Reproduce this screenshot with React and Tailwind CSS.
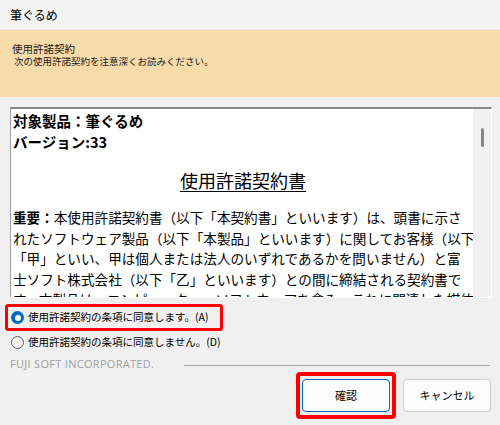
export default function App() {
  const jp = { fontFamily: '"Noto Sans CJK JP", "Noto Sans", sans-serif' };

  return (
    <div className="w-[500px] h-[425px] bg-[#f0f0f0] overflow-hidden text-black" style={jp}>
      {/* Title bar */}
      <div className="h-[30px] bg-[#f3f3f3] border-b border-[#e8e8e8] flex items-center pl-[10px] text-[12px] leading-none">
        筆ぐるめ
      </div>

      {/* Header */}
      <div className="h-[67px] bg-[#f8dbab] pl-[12px] pt-[12px]">
        <div className="text-[10.5px] leading-[13px] text-[#1a1a1a]">使用許諾契約</div>
        <div className="text-[9.5px] leading-[13px] pl-[2px] text-[#1a1a1a]">次の使用許諾契約を注意深くお読みください。</div>
      </div>

      {/* License text box */}
      <div className="mt-[10px] ml-[10px] w-[482px] h-[191px] flex bg-white border-t-2 border-l border-t-[#8a8a8a] border-l-[#a0a0a0] border-r border-b border-r-white border-b-white">
        <div className="flex-1 overflow-hidden pl-[2px] pt-[1px]">
          <div className="text-[14.5px] leading-[21px] font-bold whitespace-nowrap">対象製品：筆ぐるめ</div>
          <div className="text-[14.5px] leading-[21px] font-bold whitespace-nowrap">バージョン:33</div>
          <div className="mt-[16px] text-center text-[18px] leading-[24px] underline underline-offset-[3px] decoration-1 whitespace-nowrap">
            使用許諾契約書
          </div>
          <div className="mt-[15px] text-[13.6px] leading-[20.5px] whitespace-nowrap">
            <div><span className="font-bold">重要：</span>本使用許諾契約書（以下「本契約書」といいます）は、頭書に示さ</div>
            <div>れたソフトウェア製品（以下「本製品」といいます）に関してお客様（以下</div>
            <div>「甲」といい、甲は個人または法人のいずれであるかを問いません）と富</div>
            <div>士ソフト株式会社（以下「乙」といいます）との間に締結される契約書で</div>
            <div>す。本製品は、コンピューター・ソフトウェアを含み、これに関連した媒体</div>
          </div>
        </div>
        <div className="w-[18px] bg-[#f0f0f0] pt-[19px] pl-[8px]">
          <div className="w-[3px] h-[19px] bg-[#858585] rounded-full"></div>
        </div>
      </div>

      {/* Radio options */}
      <div className="mt-[6px] ml-[5px] w-[218px] h-[27px] border-[3px] border-[#ff0000] rounded-[3px] flex items-center pl-[3px] gap-[4px]">
        <span className="w-[13px] h-[13px] rounded-full bg-[#0067c0] flex items-center justify-center">
          <span className="w-[6px] h-[6px] rounded-full bg-white"></span>
        </span>
        <span className="text-[10.5px] leading-none whitespace-nowrap">使用許諾契約の条項に同意します。(A)</span>
      </div>
      <div className="ml-[11px] h-[22px] flex items-center gap-[4px]">
        <span className="w-[13px] h-[13px] rounded-full border border-[#5f5f5f] bg-[#f5f5f5]"></span>
        <span className="text-[10.5px] leading-none whitespace-nowrap">使用許諾契約の条項に同意しません。(D)</span>
      </div>

      {/* Footer */}
      <div className="mt-[4px] pl-[10px] pr-[10px] flex items-center h-[14px]">
        <span className="text-[11px] text-[#a0a0a0] tracking-[0.3px] whitespace-nowrap" style={{ fontFamily: '"Open Sans", "Noto Sans", sans-serif' }}>
          FUJI SOFT INCORPORATED.
        </span>
        <div className="flex-1 ml-[30px] h-px bg-[#a9a9a9] mt-[2px]"></div>
      </div>

      {/* Buttons */}
      <div className="mt-[1px] flex justify-end pr-[9px] gap-[7px]">
        <div className="w-[100px] h-[47px] border-[4px] border-[#ff0000] rounded-[4px] flex items-center justify-center">
          <button className="w-[88px] h-[33px] bg-[#fdfdfd] border border-[#0067c0] rounded-[4px] text-[11px]">確認</button>
        </div>
        <div className="pt-[7px]">
          <button className="w-[88px] h-[33px] bg-[#fdfdfd] border border-[#d0d0d0] rounded-[4px] text-[11px]">キャンセル</button>
        </div>
      </div>
    </div>
  );
}
